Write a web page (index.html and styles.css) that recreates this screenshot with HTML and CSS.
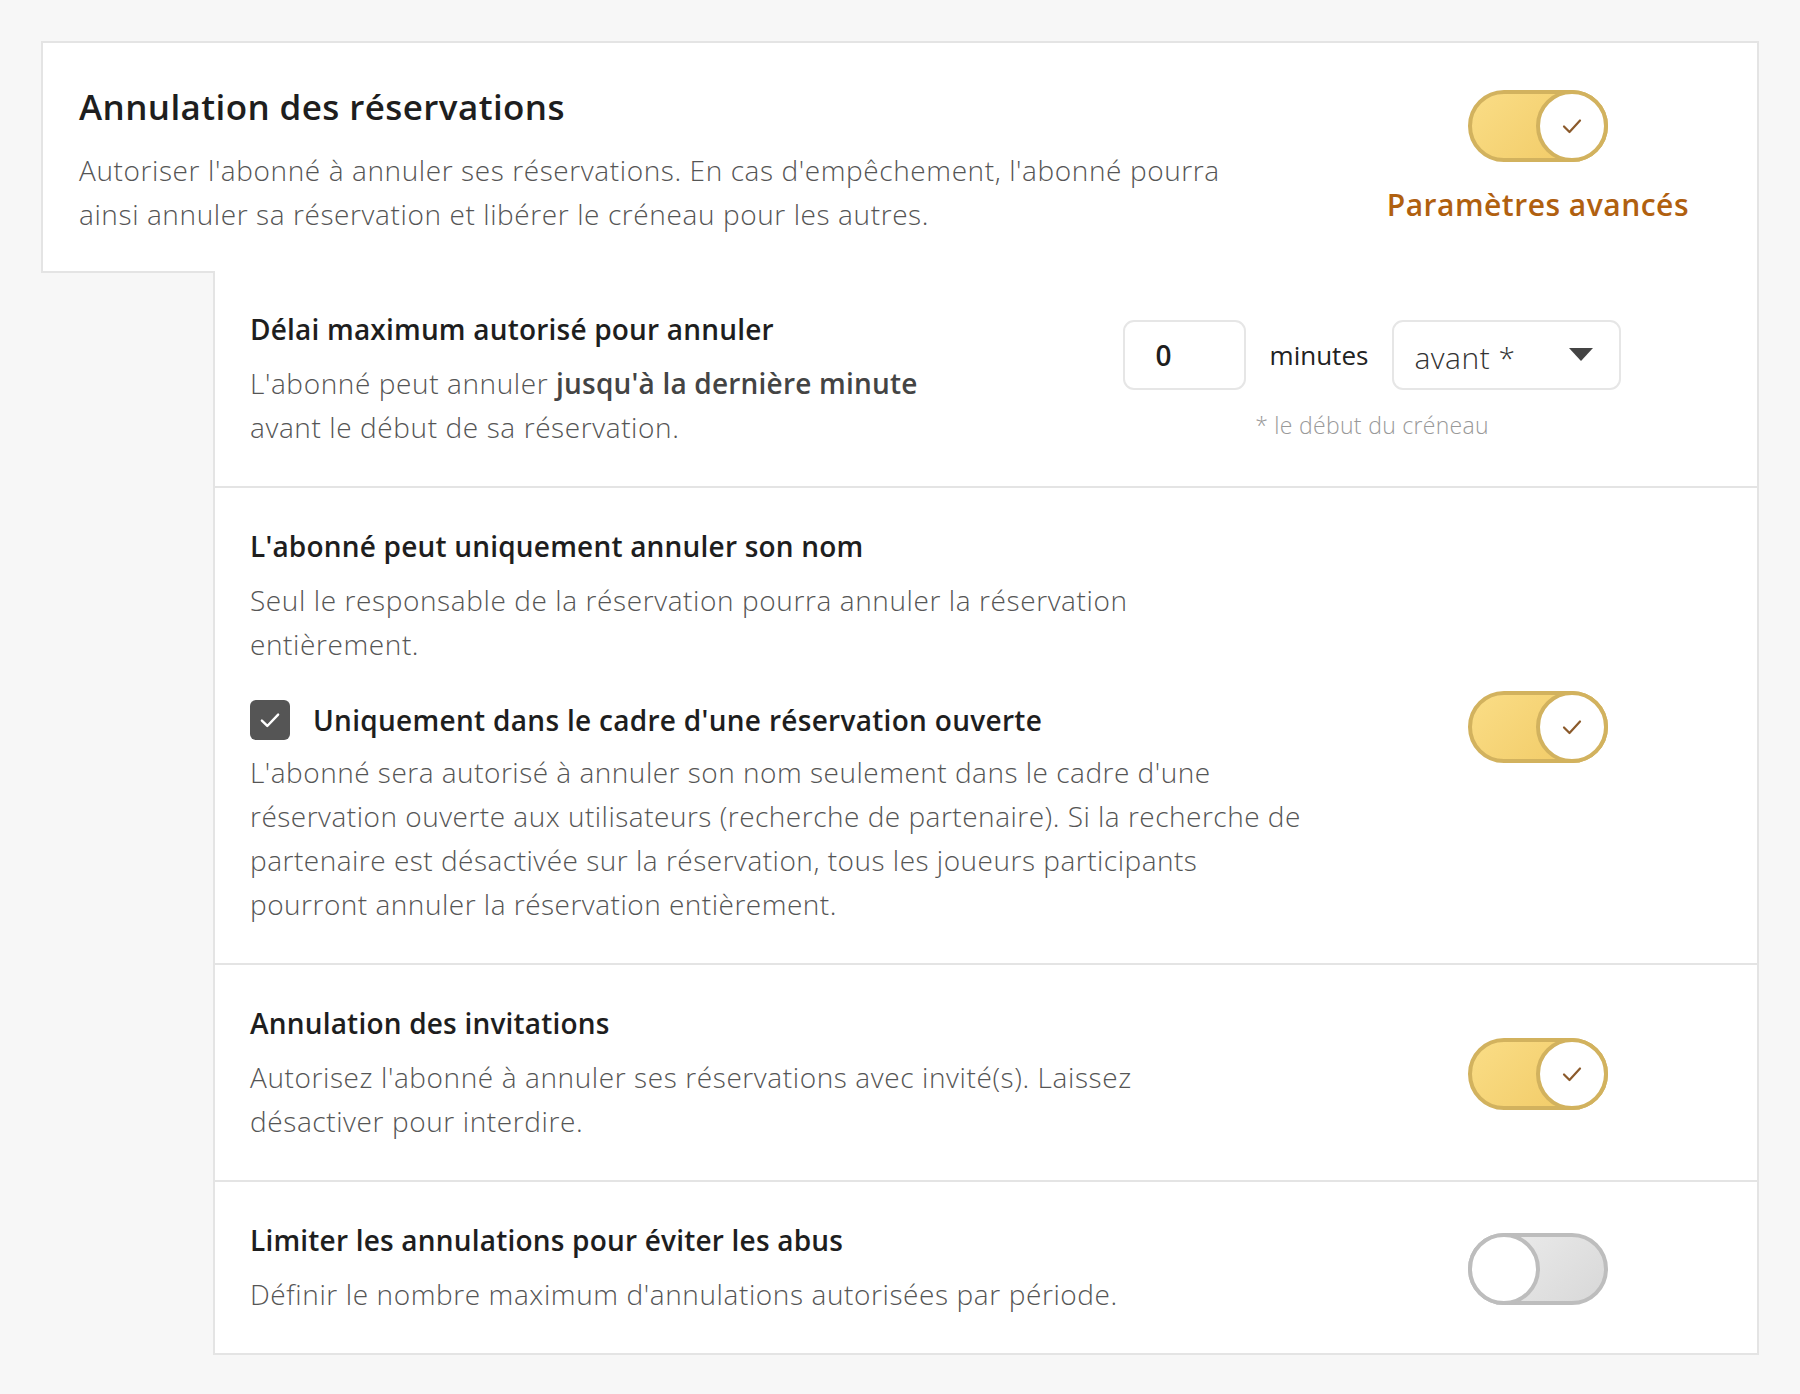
FILE: index.html
```html
<!DOCTYPE html>
<html lang="fr">
<head>
<meta charset="utf-8">
<title>Annulation des réservations</title>
<link rel="stylesheet" href="styles.css">
</head>
<body>
<div class="card">
  <div class="head">
    <div class="head-text">
      <h1>Annulation des réservations</h1>
      <p class="desc">Autoriser l'abonné à annuler ses réservations. En cas d'empêchement, l'abonné pourra ainsi annuler sa réservation et libérer le créneau pour les autres.</p>
    </div>
    <div class="side side-head">
      <span class="toggle on"><span class="knob"><svg viewBox="0 0 24 24" width="24" height="24"><polyline points="4,12.5 9.5,18 20,6.5" fill="none" stroke="#8b5a2b" stroke-width="2.2" stroke-linecap="round" stroke-linejoin="round"/></svg></span></span>
      <a class="adv" href="#">Paramètres avancés</a>
    </div>
  </div>

  <div class="panel">
    <section class="row row-delay">
      <div class="text">
        <h2>Délai maximum autorisé pour annuler</h2>
        <p class="desc narrow">L'abonné peut annuler <strong>jusqu'à la dernière minute</strong> avant le début de sa réservation.</p>
      </div>
      <div class="delay">
        <div class="controls">
          <span class="num">0</span>
          <span class="unit">minutes</span>
          <span class="select">avant *<span class="caret"></span></span>
        </div>
        <p class="hint">* le début du créneau</p>
      </div>
    </section>

    <section class="row">
      <div class="text">
        <h2>L'abonné peut uniquement annuler son nom</h2>
        <p class="desc">Seul le responsable de la réservation pourra annuler la réservation entièrement.</p>
        <div class="check-row">
          <span class="checkbox"><svg viewBox="0 0 24 24" width="26" height="26"><polyline points="4.5,12.5 9.5,17.5 19.5,7" fill="none" stroke="#fff" stroke-width="2.2" stroke-linecap="round" stroke-linejoin="round"/></svg></span>
          <span class="check-label">Uniquement dans le cadre d'une réservation ouverte</span>
        </div>
        <p class="desc sub">L'abonné sera autorisé à annuler son nom seulement dans le cadre d'une réservation ouverte aux utilisateurs (recherche de partenaire). Si la recherche de partenaire est désactivée sur la réservation, tous les joueurs participants pourront annuler la réservation entièrement.</p>
      </div>
      <div class="side">
        <span class="toggle on"><span class="knob"><svg viewBox="0 0 24 24" width="24" height="24"><polyline points="4,12.5 9.5,18 20,6.5" fill="none" stroke="#8b5a2b" stroke-width="2.2" stroke-linecap="round" stroke-linejoin="round"/></svg></span></span>
      </div>
    </section>

    <section class="row">
      <div class="text">
        <h2>Annulation des invitations</h2>
        <p class="desc">Autorisez l'abonné à annuler ses réservations avec invité(s). Laissez désactiver pour interdire.</p>
      </div>
      <div class="side">
        <span class="toggle on"><span class="knob"><svg viewBox="0 0 24 24" width="24" height="24"><polyline points="4,12.5 9.5,18 20,6.5" fill="none" stroke="#8b5a2b" stroke-width="2.2" stroke-linecap="round" stroke-linejoin="round"/></svg></span></span>
      </div>
    </section>

    <section class="row">
      <div class="text">
        <h2>Limiter les annulations pour éviter les abus</h2>
        <p class="desc">Définir le nombre maximum d'annulations autorisées par période.</p>
      </div>
      <div class="side">
        <span class="toggle off"><span class="knob"></span></span>
      </div>
    </section>
  </div>
</div>
</body>
</html>
```

FILE: styles.css
```css
* { box-sizing: border-box; }

body {
  margin: 0;
  padding: 41px;
  background: #f7f7f7;
  font-family: "Open Sans", "Noto Sans", "Liberation Sans", sans-serif;
  color: #222;
}

.head {
  display: flex;
  align-items: center;
  background: #fff;
  border: 2px solid #e4e4e4;
  padding: 44px 68px 35px 36px;
}

.head-text { flex: 1; }

h1 {
  margin: 0;
  font-size: 35px;
  line-height: 40px;
  letter-spacing: 0.4px;
  font-weight: 600;
  color: #1e1e1e;
}

.desc {
  margin: 14px 0 0;
  font-size: 28px;
  line-height: 44px;
  letter-spacing: 0.6px;
  font-weight: 300;
  color: #555;
  max-width: 1010px;
}

.head .desc {
  margin-top: 21px;
  max-width: 1195px;
}

.desc strong {
  font-weight: 600;
  letter-spacing: 0.2px;
  color: #444;
}

.desc.narrow { max-width: 720px; }

.side {
  flex: 0 0 302px;
  display: flex;
  flex-direction: column;
  align-items: center;
}

.side-head {
  gap: 25px;
  margin-bottom: 10px;
}

.adv {
  font-size: 30px;
  line-height: 36px;
  letter-spacing: 0.5px;
  font-weight: 600;
  color: #b0600f;
  text-decoration: none;
  white-space: nowrap;
}

/* toggle switch */
.toggle {
  display: flex;
  align-items: center;
  width: 140px;
  height: 72px;
  border-radius: 36px;
  border: 4px solid #d2b25e;
  background: linear-gradient(135deg, #fadd86 0%, #f0c862 100%);
}

.toggle.on { justify-content: flex-end; }

.toggle .knob {
  flex: 0 0 72px;
  width: 72px;
  height: 72px;
  margin: -4px;
  border-radius: 50%;
  border: 4px solid #d2b25e;
  background: #fff;
  display: flex;
  align-items: center;
  justify-content: center;
}

.toggle.off {
  justify-content: flex-start;
  border-color: #bdbdbd;
  background: linear-gradient(135deg, #eeeeee 0%, #d8d8d8 100%);
}

.toggle.off .knob { border-color: #bdbdbd; }

/* sub panel */
.panel {
  margin-left: 172px;
  margin-top: -2px;
  background: #fff;
  border: 2px solid #e4e4e4;
  border-top: 0;
}

.row {
  display: flex;
  align-items: center;
  padding: 40px 68px 37px 35px;
}

.row + .row { border-top: 2px solid #e4e4e4; }

.text { flex: 1; }

h2 {
  margin: 0;
  font-size: 28px;
  line-height: 36px;
  letter-spacing: 0.2px;
  font-weight: 600;
  color: #1e1e1e;
}

/* delay controls */
.delay {
  flex: 0 0 634px;
  display: flex;
  flex-direction: column;
  align-items: center;
}

.controls {
  display: flex;
  align-items: center;
}

.num {
  width: 123px;
  height: 70px;
  border: 2px solid #e6e6e6;
  border-radius: 11px;
  padding-left: 31px;
  font-size: 28px;
  line-height: 66px;
  font-weight: 600;
  color: #1e1e1e;
}

.unit {
  margin: 0 24px;
  font-size: 26px;
  color: #222;
}

.select {
  width: 229px;
  height: 70px;
  border: 2px solid #e6e6e6;
  border-radius: 11px;
  padding: 4px 26px 0 20px;
  display: flex;
  align-items: center;
  justify-content: space-between;
  font-size: 30px;
  letter-spacing: 0.5px;
  font-weight: 300;
  color: #333;
}

.caret {
  width: 0;
  height: 0;
  margin-top: -6px;
  border-left: 12px solid transparent;
  border-right: 12px solid transparent;
  border-top: 13px solid #444;
}

.hint {
  margin: 20px 0 0;
  font-size: 23px;
  line-height: 30px;
  letter-spacing: 0.3px;
  font-weight: 300;
  color: #999;
}

/* checkbox */
.check-row {
  display: flex;
  align-items: center;
  gap: 23px;
  margin-top: 34px;
}

.checkbox {
  width: 40px;
  height: 40px;
  border-radius: 6px;
  background: #555;
  display: flex;
  align-items: center;
  justify-content: center;
}

.check-label {
  font-size: 28px;
  line-height: 40px;
  letter-spacing: 0.3px;
  font-weight: 600;
  color: #1e1e1e;
}

.desc.sub {
  margin-top: 10px;
  letter-spacing: 0.5px;
  max-width: 1066px;
}
```
